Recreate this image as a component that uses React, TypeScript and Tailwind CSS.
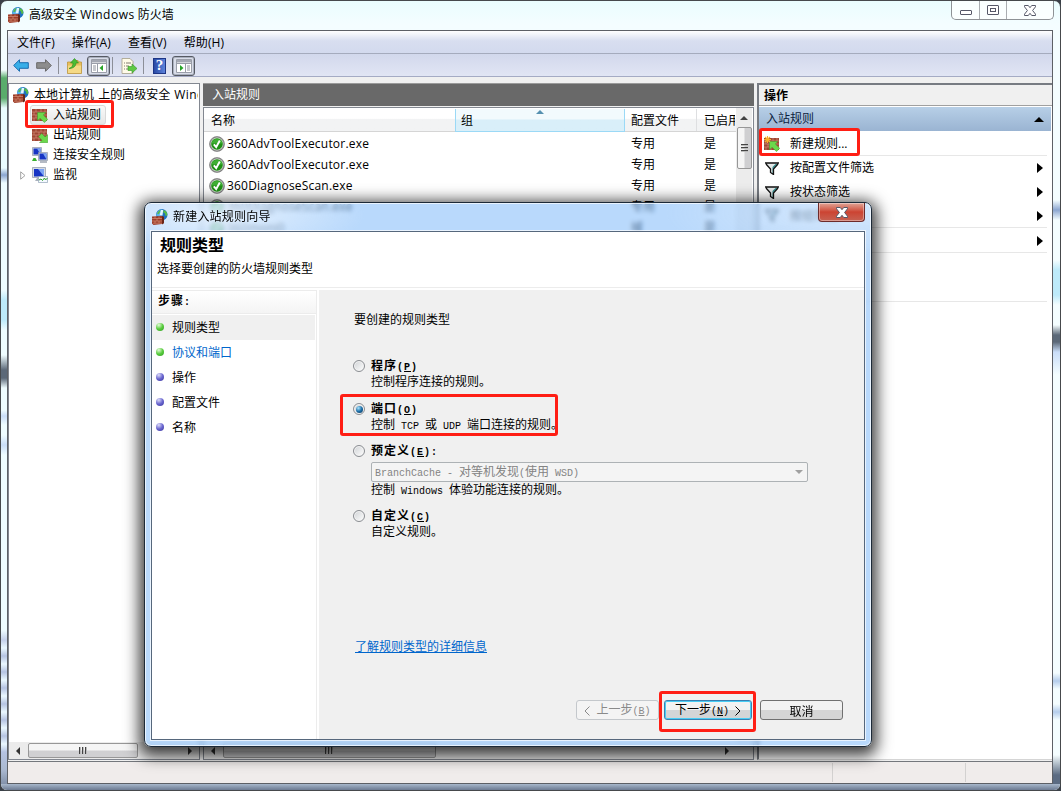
import type { ReactNode } from 'react'

const UI_FONT = "font-['Open_Sans','Noto_Sans_CJK_SC',sans-serif]"
const SONG_FONT = "font-['Noto_Sans_CJK_SC',sans-serif]"

interface Rule {
  name: string
  profile: string
  enabled: string
}

const rules: Rule[] = [
  { name: '360AdvToolExecutor.exe', profile: '专用', enabled: '是' },
  { name: '360AdvToolExecutor.exe', profile: '专用', enabled: '是' },
  { name: '360DiagnoseScan.exe', profile: '专用', enabled: '是' },
  { name: '360DiagnoseScan.exe', profile: '专用', enabled: '是' },
  { name: '360moni0', profile: '域', enabled: '是' },
]

const steps = [
  { label: '规则类型', done: true, current: true },
  { label: '协议和端口', done: true, link: true },
  { label: '操作' },
  { label: '配置文件' },
  { label: '名称' },
]

function FirewallIcon() {
  return (
    <svg width="16" height="16" viewBox="0 0 16 16" className="shrink-0">
      <circle cx="9.800" cy="5.800" r="5.700" fill="#1f70c0" />
      <path d="M4.300 6C4.600 3 7 .5 10 .2L9 3 7.500 7H4.300z" fill="#56b4ea" />
      <path d="M4.800 4.500L7.500 1.200l1 .3-1.500 3.500z" fill="#58bb46" />
      <path d="M11.500 1.200l2 .6c1.500 1.500 2 3.200 1.700 4.700l-1.700.5-.5-2.500-1.800-1z" fill="#58bb46" />
      <path d="M9 1h2.200L10.500 6.500H7.500z" fill="#e2f5ff" />
      <path d="M0 7.500l10-.5v8L1.500 16 0 14.500z" fill="#9c3c28" />
      <path d="M0 9.500h10M0 12h10M1 14.200h9M3 7.500v2M7 7.500v2M5 9.500V12M3 12v2.200M7 12v2.200" stroke="#dc9b82" strokeWidth=".6" />
      <path d="M10 7l2 .8v6.500L10 15.500z" fill="#6b2618" />
    </svg>
  )
}

function BrickIcon({ variant }: { variant: 'in' | 'out' | 'new' }) {
  return (
    <svg width="16" height="16" viewBox="0 0 16 16" className="shrink-0">
      <path d="M0 2h15v12H0z" fill="#9f4634" />
      <path d="M0 5h15M0 8h15M0 11h15M4 2v3M9 2v3M13 2v3M2 5v3M7 5v3M12 5v3M4 8v3M9 8v3M2 11v3M7 11v3" stroke="#cf8d78" strokeWidth=".7" />
      {variant === 'out' ? (
        <path d="M15.700 15.700H7.500l2.500-2.500-3.500-3.500 3.200-3.200 3.500 3.500 2.500-2.500z" fill="#6bd84c" stroke="#3c9a2b" strokeWidth=".5" />
      ) : (
        <path d="M5.500 5.500h8.300l-2.500 2.500 4.400 4.300-3.200 3.300-4.500-4.400-2.500 2.600z" fill="#6bd84c" stroke="#3c9a2b" strokeWidth=".5" />
      )}
      {variant === 'new' && (
        <path d="M3.500 0v7M0 3.500h7M1 1l5 5M6 1L1 6" stroke="#f9b02a" strokeWidth="1.100" />
      )}
    </svg>
  )
}

function ComputersIcon({ chart }: { chart?: boolean }) {
  if (chart) {
    return (
      <svg width="16" height="16" viewBox="0 0 16 16" className="shrink-0">
        <path d="M.5.500h13v10H.5z" fill="#d6dbe4" stroke="#8d97a8" strokeWidth=".7" />
        <path d="M2 2h10v7.500H2z" fill="#1735c4" />
        <path d="M6 2h6v7.500z" fill="#7ba4f3" />
        <path d="M5 11h4l1 3H3z" fill="#a9b1bd" />
        <path d="M6.500 9.500h9v6h-9z" fill="#f5faff" stroke="#8295ac" strokeWidth=".6" />
        <path d="M7 13l2-1 1.500 1.500 2-2.500 1 2 2-2" fill="none" stroke="#2ea22c" />
      </svg>
    )
  }
  return (
    <svg width="16" height="16" viewBox="0 0 16 16" className="shrink-0">
      <path d="M.5.500h9v8h-9z" fill="#d6dbe4" stroke="#8d97a8" strokeWidth=".7" />
      <path d="M1.500 1.500h7v6h-7z" fill="#1735c4" />
      <path d="M5 1.500h3.500v6z" fill="#7ba4f3" />
      <path d="M6.500 5.500h9v8h-9z" fill="#d6dbe4" stroke="#8d97a8" strokeWidth=".7" />
      <path d="M7.500 6.500h7v6h-7z" fill="#1735c4" />
      <path d="M11 6.500h3.500v6z" fill="#7ba4f3" />
      <path d="M8 15h7" stroke="#8b95a5" strokeWidth="1.300" />
      <path d="M0 14l1.500-3h2L5 14z" fill="#3bb12f" />
    </svg>
  )
}

function CheckIcon() {
  return (
    <svg width="16" height="16" viewBox="0 0 16 16" className="shrink-0">
      <circle cx="8" cy="8" r="7.500" fill="#8b8b8b" stroke="#6f6f6f" strokeWidth=".6" />
      <circle cx="8" cy="8" r="6.400" fill="#d4dcd2" />
      <circle cx="8" cy="8" r="5.800" fill="#1f9014" />
      <path d="M2.500 7.500a5.600 5.600 0 0 1 11 0z" fill="#3fae33" />
      <path d="M4.800 8.300l2.400 2.700L10.800 4.500" fill="none" stroke="#fff" strokeWidth="1.900" />
    </svg>
  )
}

function FilterIcon() {
  return (
    <svg width="14" height="13" viewBox="0 0 14 13" className="ml-px shrink-0">
      <path d="M.5.800h13v1.300L8.700 7v5.500L5.300 10.500V7L.5 2.100z" fill="#e4e8e8" />
      <path d="M8.500 6l4-4h-2L7.500 5v6.500h1z" fill="#2e8c8c" />
      <path d="M0 1h14M1 2l4.500 5v3.500l3 2V7L13 2" fill="none" stroke="#111" strokeWidth="1.300" />
    </svg>
  )
}

function Triangle({ dir, className = '' }: { dir: 'left' | 'right' | 'up'; className?: string }) {
  const points = { left: '5,0 5,8 1,4', right: '1,0 1,8 5,4', up: '0,5 8,5 4,1' }
  return (
    <svg width={dir === 'up' ? 8 : 6} height={dir === 'up' ? 6 : 8} className={`shrink-0 ${className}`}>
      <polygon points={points[dir]} fill="currentColor" />
    </svg>
  )
}

function ChevronGlyph({ dir }: { dir: 'left' | 'right' }) {
  return (
    <svg width="6" height="10" viewBox="0 0 6 10" fill="none" stroke="currentColor">
      <path d={dir === 'left' ? 'M5.500.500L1 5l4.500 4.500' : 'M.5.500L5 5 .5 9.500'} />
    </svg>
  )
}

function CloseGlyph() {
  return (
    <svg width="12" height="11" viewBox="0 0 12 11">
      <path d="M.5.500h3.800L6 2.700 7.700.500h3.800v1.300L8.600 5.500l2.900 3.700v1.300H7.700L6 8.300l-1.700 2.200H.5V9.200l2.900-3.700L.5 1.800z" fill="#fff" stroke="#555868" strokeWidth="1" />
    </svg>
  )
}

function TitleBar() {
  return (
    <div className="flex h-[29px] justify-between pl-[7px]">
      <div className="-mt-px flex items-center gap-[5px]">
        <FirewallIcon />
        <span>高级安全 <span className="tracking-[0.5px]">Windows</span> 防火墙</span>
      </div>
      <div className="mr-[6px] flex h-[19px] w-[103px] rounded-b-[5px] border border-t-0 border-[#8e9296] bg-white/70">
        <div className="flex w-7 items-center justify-center border-r border-[#a9adb1] pt-[5px]">
          <div className="h-[5px] w-3 rounded-[1px] border border-[#555868] bg-white" />
        </div>
        <div className="flex w-[27px] items-center justify-center border-r border-[#a9adb1]">
          <div className="flex h-[10px] w-3 items-center justify-center rounded-[1px] border border-[#555868] bg-white">
            <div className="h-1 w-[6px] border border-[#555868]" />
          </div>
        </div>
        <div className="flex flex-1 items-center justify-center">
          <CloseGlyph />
        </div>
      </div>
    </div>
  )
}

function PanelIcon({ right }: { right?: boolean }) {
  return (
    <div className="flex h-5 w-[23px] items-center justify-center rounded-[3px] border border-[#565a63] bg-[#d9dde8] shadow-[inset_0_0_0_1px_#aab0bf]">
      <svg width="16" height="14" viewBox="0 0 16 14">
        <path d="M.5.500h15v13H.5z" fill="#fff" stroke="#9a9ea9" />
        <path d="M1 1h14v2.500H1z" fill="#a4a8b3" />
        <path d="M1 4.500h14" stroke="#9a9ea9" />
        {right ? (
          <>
            <path d="M9.500 5v8" stroke="#9a9ea9" />
            <path d="M4 6l3.500 3L4 12z" fill="#28a428" />
            <path d="M11 7h3M11 9h3M11 11h3" stroke="#8e929c" />
          </>
        ) : (
          <>
            <path d="M6.500 5v8" stroke="#9a9ea9" />
            <path d="M12 6L8.500 9l3.500 3z" fill="#28a428" />
            <path d="M2 7h3M2 9h3M2 11h3" stroke="#8e929c" />
          </>
        )}
      </svg>
    </div>
  )
}

function Toolbar() {
  return (
    <div className="flex h-[23px] items-center border-b border-[#a5abc4] bg-linear-to-b from-[#d2d8ec] to-[#e1e5f4] pt-px pl-[5px]">
      <svg width="16" height="13" viewBox="0 0 16 13">
        <path d="M.7 6.500L6.500.700v3h8.800v5.600H6.500v3z" fill="#38aee8" stroke="#1b6cae" />
      </svg>
      <svg width="16" height="13" viewBox="0 0 16 13" className="ml-[7px]">
        <path d="M15.300 6.500L9.500.700v3H.7v5.600h8.800v3z" fill="#8d8d8d" stroke="#696969" />
      </svg>
      <div className="ml-[6px] h-[17px] w-px bg-[#8c8f98]" />
      <svg width="15" height="16" viewBox="0 0 15 16" className="ml-2">
        <path d="M.5 4h5L7 2.500h4L12.500 4h2v11.500H.5z" fill="#e8bf5b" stroke="#b98f30" strokeWidth=".7" />
        <path d="M1 7.500h13V15H1z" fill="#f5d985" />
        <path d="M2 10.500C5 9.500 6 7.500 6 5H3.500L7.500.500 11.500 5H9c0 3-2.500 5.500-7 5.500z" fill="#4cbd35" stroke="#2c8a1c" strokeWidth=".6" />
      </svg>
      <div className="ml-[5px]">
        <PanelIcon />
      </div>
      <div className="ml-[2px] h-[17px] w-px bg-[#8c8f98]" />
      <svg width="16" height="16" viewBox="0 0 16 16" className="ml-2">
        <path d="M1 .500h8l3 3V15.500H1z" fill="#fffbe8" stroke="#a59e86" strokeWidth=".8" />
        <path d="M3 5h1M5 5h5M3 8h1M5 8h3M3 11h1M5 11h3" stroke="#807c70" />
        <path d="M7 8.500h4V6l5 4.500L11 15v-2.500H7z" fill="#5fc943" stroke="#37932a" strokeWidth=".6" />
      </svg>
      <div className="ml-[6px] h-[17px] w-px bg-[#8c8f98]" />
      <div className="ml-[9px] flex h-4 w-[13px] items-center justify-center border border-[#1d3585] bg-linear-to-r from-[#2a4aa5] to-[#5d83dc] font-['Liberation_Serif',serif] text-[15px] font-bold leading-none text-white">
        ?
      </div>
      <div className="ml-[6px]">
        <PanelIcon right />
      </div>
    </div>
  )
}

function HScroll({ thumb, grip, right }: { thumb: string; grip: string; right: string }) {
  return (
    <div className="flex h-[17px] shrink-0 items-center bg-[#ebebeb] pl-[6px]">
      <Triangle dir="left" className="text-[#333]" />
      <div className={`ml-[7px] flex h-[15px] shrink-0 items-center rounded-[2px] border border-[#979797] bg-linear-to-b from-[#f5f5f5] from-45% to-[#d0d0d2] to-55% ${thumb}`}>
        <div className={`flex gap-px ${grip}`}>
          {[0, 1, 2].map((i) => (
            <div key={i} className="h-[7px] w-[2px] border-l border-[#444] bg-[#bbb]" />
          ))}
        </div>
      </div>
      <Triangle dir="right" className={`text-[#333] ${right}`} />
    </div>
  )
}

function TreePane() {
  return (
    <div className="flex w-[192px] shrink-0 flex-col overflow-hidden border border-[#828790] bg-white">
      <div className="mr-px min-h-0 flex-1 overflow-hidden pt-px whitespace-nowrap">
        <div className="flex h-5 items-center gap-[5px] pl-1">
          <FirewallIcon />
          <span>
            本地计算机<span className="tracking-[1px]"> </span>上的高级安全<span className="tracking-[1px]"> </span>
            <span className="tracking-[0.45px]">Windows</span>
          </span>
        </div>
        <div className="flex h-5 items-center pl-[21px]">
          <div className="flex h-5 items-center gap-[5px] rounded-[3px] border border-[#d9d9d9] bg-linear-to-b from-[#fafafa] to-[#e6e6e6] pr-1 pl-px">
            <BrickIcon variant="in" />
            入站规则
          </div>
        </div>
        <div className="flex h-5 items-center gap-[5px] pl-[23px]">
          <BrickIcon variant="out" />
          出站规则
        </div>
        <div className="flex h-5 items-center gap-[5px] pl-[23px]">
          <ComputersIcon />
          连接安全规则
        </div>
        <div className="flex h-5 items-center pl-[11px]">
          <svg width="6" height="9" viewBox="0 0 6 9">
            <path d="M.7.800v7.400l4.300-3.700z" fill="#fff" stroke="#a3a3a3" />
          </svg>
          <div className="ml-[6px] flex items-center gap-[5px]">
            <ComputersIcon chart />
            监视
          </div>
        </div>
      </div>
      <HScroll thumb="w-[110px]" grip="ml-[50px]" right="ml-[49px]" />
    </div>
  )
}

function RulesPane() {
  return (
    <div className="ml-[3px] flex w-[551px] shrink-0 flex-col">
      <div className="flex h-[23px] items-center border-t border-[#9a9a9a] bg-[#696969] pl-[9px] text-white">入站规则</div>
      <div className="mt-px flex min-h-0 flex-1 flex-col border border-[#828790] bg-white">
        <div className="flex min-h-0 flex-1">
          <div className="flex-1">
            <div className="flex h-6 items-stretch border-b border-[#d5d5d5] bg-linear-to-b from-white from-45% to-[#f2f3f4] to-50% pt-px">
              <div className="flex w-[251px] items-center pt-px pl-[7px]">名称</div>
              <div className="relative -mb-px flex w-[170px] items-center border-x border-b border-[#9bd9f6] bg-linear-to-b from-[#f2fafd] from-45% to-[#d9eff9] to-50% pt-px pl-[5px]">
                组
                <Triangle dir="up" className="absolute top-0 left-[80px] text-[#5590b0]" />
              </div>
              <div className="flex w-[72px] items-center border-r border-[#dedfe1] pt-px pl-[6px]">配置文件</div>
              <div className="flex w-[38px] items-center overflow-hidden pt-px pl-[7px] whitespace-nowrap">
                已启用
              </div>
            </div>
            <div className="pt-px">
              {rules.map((rule, i) => (
                <div key={i} className="flex h-[21px] items-center">
                  <div className="flex w-[427px] items-center gap-[2px] pl-[5px]">
                    <CheckIcon />
                    <span className="tracking-[0.2px]">{rule.name}</span>
                  </div>
                  <div className="w-[73px]">{rule.profile}</div>
                  <div>{rule.enabled}</div>
                </div>
              ))}
            </div>
          </div>
          <div className="mr-px flex w-[16px] flex-col items-center bg-[#ececec] pt-[7px]">
            <Triangle dir="up" className="text-[#444]" />
            <div className="mt-[6px] flex h-[42px] w-[15px] flex-col items-center justify-center gap-px rounded-[2px] border border-[#979797] bg-linear-to-r from-[#f5f5f5] from-45% to-[#cfcfd1] to-55%">
              {[0, 1, 2].map((i) => (
                <div key={i} className="h-[2px] w-[7px] border-t border-[#444] bg-[#bbb]" />
              ))}
            </div>
          </div>
        </div>
        <HScroll thumb="w-[213px]" grip="ml-[101px]" right="ml-[288px]" />
      </div>
    </div>
  )
}

interface ActionRowProps {
  icon?: ReactNode
  label: string
  arrow?: boolean
  divider?: boolean
}

function ActionRow({ icon, label, arrow, divider }: ActionRowProps) {
  return (
    <div className={`mr-[5px] flex h-6 items-center pl-[5px] ${divider ? 'border-b border-[#e7e7e7]' : ''}`}>
      <div className="w-[26px]">{icon}</div>
      <div className="flex-1">{label}</div>
      {arrow && (
        <svg width="6" height="10" className="mr-1">
          <path d="M0 0v10l6-5z" />
        </svg>
      )}
    </div>
  )
}

function ActionsPane() {
  return (
    <div className="ml-[3px] flex-1 border-t-2 border-b border-l-2 border-[#777b82] border-b-[#d5d5d5] bg-white">
      <div className="flex h-[21px] items-center border-b border-[#a0a0a0] bg-[#f0f0f0] pt-px pl-[5px] font-bold">操作</div>
      <div className="mt-px mr-px flex h-[24px] items-center justify-between bg-linear-to-b from-[#b7cfe7] to-[#9ab4d2] pr-[7px] pl-[7px] text-[#0c2340]">
        入站规则
        <svg width="10" height="5">
          <path d="M0 5h10L5 0z" fill="#000" />
        </svg>
      </div>
      <div className="pt-px">
        <ActionRow icon={<BrickIcon variant="new" />} label="新建规则..." divider />
        <ActionRow icon={<FilterIcon />} label="按配置文件筛选" arrow />
        <ActionRow icon={<FilterIcon />} label="按状态筛选" arrow />
        <ActionRow icon={<FilterIcon />} label="按组筛选" arrow divider />
        <div className="pt-px">
          <ActionRow label="查看" arrow divider />
        </div>
      </div>
      <div className="mr-[5px] h-[49px] border-b border-[#e7e7e7]" />
    </div>
  )
}

function StepDot({ done }: { done?: boolean }) {
  return (
    <div
      className={`h-2 w-2 rounded-full ${
        done
          ? 'bg-[radial-gradient(circle_at_35%_25%,#e4fbd9,#59cc3e_50%,#2f9c22)]'
          : 'bg-[radial-gradient(circle_at_35%_25%,#dcdcf8,#6a66cf_50%,#38349c)]'
      }`}
    />
  )
}

// Half-width characters: 6px advance next to the 12px full-width ones
function Mono({ children }: { children: ReactNode }) {
  return <span className="font-['Liberation_Mono',monospace] text-[10px] whitespace-pre">{children}</span>
}

interface OptionProps {
  label: string
  hotkey: string
  suffix?: string
  checked?: boolean
  description: ReactNode
  children?: ReactNode
}

function Option({ label, hotkey, suffix, checked, description, children }: OptionProps) {
  return (
    <div>
      <div className="flex h-4 items-center">
        <div className="flex h-3 w-3 items-center justify-center rounded-full border border-[#8a8d92] bg-linear-to-br from-[#cfd2d5] to-white shadow-[inset_0_0_0_1px_#f4f4f4]">
          {checked && <div className="h-[7px] w-[7px] rounded-full bg-[radial-gradient(circle_at_35%_30%,#a9e4ff,#1d6fa8_50%,#0b2f52)]" />}
        </div>
        <div className="ml-[6px] pt-px font-bold tracking-[1px]">
          {label}
          <Mono>
            (<u>{hotkey}</u>){suffix}
          </Mono>
        </div>
      </div>
      {children}
      <div className={`ml-[18px] flex h-4 items-center whitespace-pre ${typeof description === 'string' ? 'pb-[2px]' : ''}`}>
        <span>{description}</span>
      </div>
    </div>
  )
}

function WizardButton({ children, className }: { children: ReactNode; className: string }) {
  return (
    <button className={`flex h-[20px] items-center justify-center rounded-[3px] border pt-px whitespace-pre ${className}`}>
      {children}
    </button>
  )
}

function WizardDialog() {
  return (
    <div className="absolute top-[202px] left-[144px] flex h-[545px] w-[728px] flex-col rounded-[7px] border border-[#1d2a38] bg-[radial-gradient(ellipse_150px_40px_at_70px_12px,#ffffffa0,#ffffff00),radial-gradient(ellipse_180px_50px_at_700px_10px,#ffffff60,#ffffff00)] bg-[#8ac0fa99] p-[6px] pt-0 shadow-[0_4px_15px_5px_rgba(0,0,0,0.75),inset_0_0_0_1px_#ffffffb0] backdrop-blur-[2px]">
      <div className="flex h-[28px] shrink-0 justify-between pl-px">
        <div className={`flex items-center gap-[5px] ${UI_FONT}`}>
          <FirewallIcon />
          <span className="tracking-[0.2px]">新建入站规则向导</span>
        </div>
        <div className="flex h-[19px] w-[47px] items-center justify-center rounded-b-[4px] border border-t-0 border-[#6d2b2b] bg-linear-to-b from-[#dfa396] from-0% via-[#cc4332] via-50% to-[#c66152] shadow-[inset_0_0_0_1px_#ffffff60]">
          <CloseGlyph />
        </div>
      </div>
      <div className={`flex min-h-0 flex-1 flex-col border border-[#56677c] bg-white outline outline-white/70 ${SONG_FONT}`}>
        <div className="h-[56px] border-b border-[#ececec] pl-[5px]">
          <div className="pt-[2px] pl-[3px] text-[16px] leading-5 font-bold">规则类型</div>
          <div className="mt-[6px] leading-4">选择要创建的防火墙规则类型</div>
        </div>
        <div className="mt-[2px] flex min-h-0 flex-1">
          <div className="w-[165px] border-r border-[#ececec]">
            <div className="flex h-6 items-center border-y border-[#ececec] bg-linear-to-b from-white to-[#f4f4f4] pb-px pl-[6px] font-bold tracking-[1px]">
              <span>步骤<Mono>:</Mono></span>
            </div>
            <div className="mt-px mr-px">
              {steps.map((step) => (
                <div
                  key={step.label}
                  className={`flex h-[25px] items-center gap-2 pb-[2px] pl-[4px] ${step.current ? 'bg-[#f0f0f0]' : ''} ${
                    step.link ? 'text-[#0066cc]' : ''
                  }`}
                >
                  <StepDot done={step.done} />
                  {step.label}
                </div>
              ))}
            </div>
          </div>
          <div className="ml-[2px] flex-1 bg-[#f0f0f0] pt-[19px] pl-[34px]">
            <div className="flex h-5 items-center pl-px">要创建的规则类型</div>
            <div className="mt-[29px]">
              <Option label="程序" hotkey="P" description="控制程序连接的规则。" />
            </div>
            <div className="mt-[11px]">
              <Option
                label="端口"
                hotkey="O"
                checked
                description={<>控制<Mono> TCP </Mono>或<Mono> UDP </Mono>端口连接的规则。</>}
              />
            </div>
            <div className="mt-[10px]">
              <Option
                label="预定义"
                hotkey="E"
                suffix=":"
                description={<>控制<Mono> Windows </Mono>体验功能连接的规则。</>}
              >
                <div className="mt-[3px] ml-[18px] flex h-[20px] w-[437px] items-center justify-between rounded-[2px] border border-[#adb2b5] bg-[#f4f4f4] pr-1 pl-[3px] text-[#838383]">
                  <span>
                    <Mono>BranchCache - </Mono>对等机发现<Mono>(</Mono>使用<Mono> WSD)</Mono>
                  </span>
                  <svg width="8" height="4">
                    <path d="M0 0h8L4 4z" fill="#a0a0a0" />
                  </svg>
                </div>
              </Option>
            </div>
            <div className="mt-[10px]">
              <Option label="自定义" hotkey="C" description="自定义规则。" />
            </div>
            <div className="mt-[98px] flex h-4 items-center pl-[2px]">
              <a className="text-[#0066cc] underline">了解规则类型的详细信息</a>
            </div>
            <div className="mt-[46px] flex pl-[223px]">
              <WizardButton className="w-[83px] border-[#c4c8cc] bg-[#f4f4f4] text-[#8a8a8a]">
                <ChevronGlyph dir="left" />
                <span><Mono> </Mono>上一步<Mono>(<u>B</u>)</Mono></span>
              </WizardButton>
              <WizardButton className="ml-[5px] w-[88px] border-[#3c7fb1] bg-linear-to-b from-[#f2f2f2] from-48% to-[#d3d5d7] to-52% shadow-[inset_0_0_0_1px_#48cdf5]">
                <span>下一步<Mono>(<u>N</u>) </Mono></span>
                <ChevronGlyph dir="right" />
              </WizardButton>
              <WizardButton className="ml-[8px] w-[83px] border-[#707070] bg-linear-to-b from-[#f2f2f2] from-48% to-[#d5d5d5] to-52%">
                取消
              </WizardButton>
            </div>
          </div>
        </div>
      </div>
    </div>
  )
}

function Highlight({ className }: { className: string }) {
  return <div className={`absolute rounded-[3px] border-3 border-[#ff1e14] ${className}`} />
}

export default function App() {
  return (
    <div className={`relative h-[791px] w-[1061px] overflow-hidden bg-[#3a4048] text-[12px] leading-4 text-black ${UI_FONT}`}>
      <div className="flex h-[791px] w-[1061px] flex-col rounded-[7px] border border-[#46494c] bg-linear-to-b from-[#eafdfe] via-[#f4fdff] via-3% to-[#eefaff]">
        <TitleBar />
        <div className="flex min-h-0 flex-1">
          <div className="w-[6px] bg-[linear-gradient(to_bottom,#f4fdff_0_40px,#5aac6c_48px_68px,#eafcff_78px_138px,#8ba5d0_145px,#eefcff_153px_260px,#bdeafa_270px_290px,#eefcff_300px_325px,#5b6878_340px_348px,#eefcff_358px_380px,#c9ddf8_386px,#eefcff_395px_405px,#c9ddf8_415px,#eefcff_425px_600px,#c4d0ea_610px,#eaf8ff_618px,#b5c3e2_626px,#eaf8ff_634px,#b5c3e2_642px,#eaf8ff_650px,#b5c3e2_658px,#eaf8ff_666px,#b5c3e2_674px,#eaf8ff_682px,#b5c3e2_690px,#eaf8ff_698px,#b5c3e2_706px,#eaf8ff_714px,#b5c3e2_722px,#aab8d0_740px,#8392aa)]" />
          <div className="flex w-[1046px] flex-col border border-[#5d6066] bg-[#f0f0f0]">
            <div className="flex h-[23px] shrink-0 items-center gap-[17px] border-b border-[#a5abbd] bg-linear-to-b from-white via-[#d8def0] via-45% to-[#d3daee] pt-px pl-[9px] tracking-[0.1px]">
              <span>文件(F)</span>
              <span>操作(A)</span>
              <span>查看(V)</span>
              <span>帮助(H)</span>
            </div>
            <Toolbar />
            <div className="mt-[6px] flex min-h-0 flex-1">
              <TreePane />
              <RulesPane />
              <ActionsPane />
            </div>
            <div className="mt-px flex h-[22px] shrink-0 border-t border-[#74777c] bg-[#f0eceb] py-px">
              <div className="w-[825px] border-r border-[#d3d1d0]" />
              <div className="w-[133px] border-r border-[#d3d1d0]" />
            </div>
          </div>
          <div className="w-[7px] bg-[linear-gradient(to_bottom,#f4fdff_0_170px,#8ba5d0_180px,#f4fdff_190px_230px,#bdeafa_240px_265px,#f4fdff_275px_295px,#5b6878_305px_312px,#c9ddf8_322px,#f4fdff_345px_643px,#b5cdec_651px,#f4fdff_659px_674px,#b5cdec_682px,#f4fdff_690px_725px,#5b6b82_745px)]" />
        </div>
        <div className="h-[6px] rounded-b-[6px] bg-linear-to-b from-[#a8b8cc] to-[#6d7b92]" />
      </div>
      <WizardDialog />
      <Highlight className="top-[100px] left-[25px] h-[28px] w-[89px]" />
      <Highlight className="top-[128px] left-[759px] h-[28px] w-[101px]" />
      <Highlight className="top-[394px] left-[340px] h-[42px] w-[218px]" />
      <Highlight className="top-[691px] left-[659px] h-[41px] w-[97px]" />
    </div>
  )
}
